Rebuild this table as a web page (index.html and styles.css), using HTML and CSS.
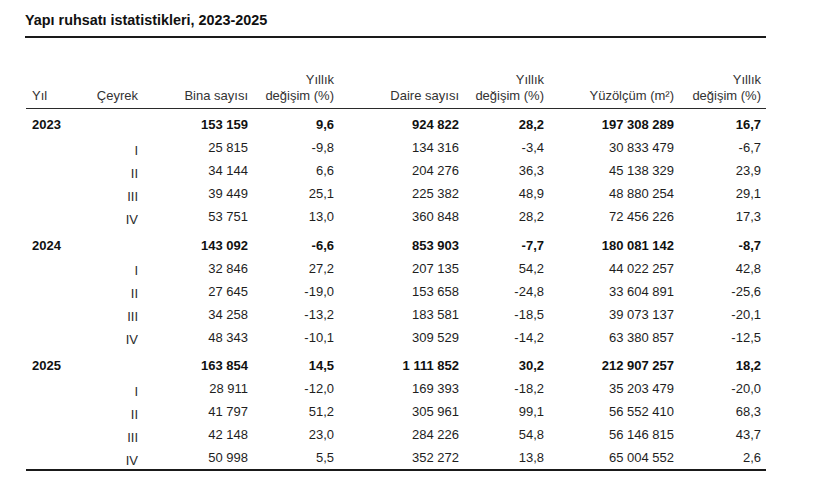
FILE: index.html
```html
<!DOCTYPE html>
<html lang="tr">
<head>
<meta charset="utf-8">
<title>Yapı ruhsatı istatistikleri, 2023-2025</title>
<link rel="stylesheet" href="styles.css">
</head>
<body>
<div class="wrap">
  <h1 class="title">Yapı ruhsatı istatistikleri, 2023-2025</h1>
  <table class="stats">
    <colgroup>
      <col class="c-yil"><col class="c-q"><col class="c-bina"><col class="c-pct">
      <col class="c-daire"><col class="c-pct2"><col class="c-yuz"><col class="c-pct3">
    </colgroup>
    <thead>
      <tr>
        <th class="l">Yıl</th>
        <th>Çeyrek</th>
        <th>Bina sayısı</th>
        <th>Yıllık<br>değişim (%)</th>
        <th>Daire sayısı</th>
        <th>Yıllık<br>değişim (%)</th>
        <th>Yüzölçüm (m²)</th>
        <th>Yıllık<br>değişim (%)</th>
      </tr>
    </thead>
    <tbody>
      <tr class="year first"><td class="l">2023</td><td class="q"></td><td>153 159</td><td>9,6</td><td>924 822</td><td>28,2</td><td>197 308 289</td><td>16,7</td></tr>
      <tr><td></td><td class="q">I</td><td>25 815</td><td>-9,8</td><td>134 316</td><td>-3,4</td><td>30 833 479</td><td>-6,7</td></tr>
      <tr><td></td><td class="q">II</td><td>34 144</td><td>6,6</td><td>204 276</td><td>36,3</td><td>45 138 329</td><td>23,9</td></tr>
      <tr><td></td><td class="q">III</td><td>39 449</td><td>25,1</td><td>225 382</td><td>48,9</td><td>48 880 254</td><td>29,1</td></tr>
      <tr><td></td><td class="q">IV</td><td>53 751</td><td>13,0</td><td>360 848</td><td>28,2</td><td>72 456 226</td><td>17,3</td></tr>
      <tr class="year"><td class="l">2024</td><td class="q"></td><td>143 092</td><td>-6,6</td><td>853 903</td><td>-7,7</td><td>180 081 142</td><td>-8,7</td></tr>
      <tr><td></td><td class="q">I</td><td>32 846</td><td>27,2</td><td>207 135</td><td>54,2</td><td>44 022 257</td><td>42,8</td></tr>
      <tr><td></td><td class="q">II</td><td>27 645</td><td>-19,0</td><td>153 658</td><td>-24,8</td><td>33 604 891</td><td>-25,6</td></tr>
      <tr><td></td><td class="q">III</td><td>34 258</td><td>-13,2</td><td>183 581</td><td>-18,5</td><td>39 073 137</td><td>-20,1</td></tr>
      <tr><td></td><td class="q">IV</td><td>48 343</td><td>-10,1</td><td>309 529</td><td>-14,2</td><td>63 380 857</td><td>-12,5</td></tr>
      <tr class="year"><td class="l">2025</td><td class="q"></td><td>163 854</td><td>14,5</td><td>1 111 852</td><td>30,2</td><td>212 907 257</td><td>18,2</td></tr>
      <tr><td></td><td class="q">I</td><td>28 911</td><td>-12,0</td><td>169 393</td><td>-18,2</td><td>35 203 479</td><td>-20,0</td></tr>
      <tr><td></td><td class="q">II</td><td>41 797</td><td>51,2</td><td>305 961</td><td>99,1</td><td>56 552 410</td><td>68,3</td></tr>
      <tr><td></td><td class="q">III</td><td>42 148</td><td>23,0</td><td>284 226</td><td>54,8</td><td>56 146 815</td><td>43,7</td></tr>
      <tr class="last"><td></td><td class="q">IV</td><td>50 998</td><td>5,5</td><td>352 272</td><td>13,8</td><td>65 004 552</td><td>2,6</td></tr>
    </tbody>
  </table>
</div>
</body>
</html>
```

FILE: styles.css
```css
html, body {
  margin: 0;
  padding: 0;
  background: #ffffff;
}

body {
  font-family: "Liberation Sans", Arial, sans-serif;
  color: #1e1e1e;
}

.wrap {
  width: 740px;
  margin-left: 26px;
}

.title {
  margin: 11px 0 0 -1px;
  padding: 0 0 7px 0;
  font-size: 14.4px;
  line-height: 18px;
  font-weight: bold;
  color: #111;
  border-bottom: 2px solid #1a1a1a;
}

.stats {
  width: 740px;
  border-collapse: collapse;
  table-layout: fixed;
  font-size: 13px;
}

.c-yil { width: 54px; }
.c-q { width: 63px; }
.c-bina { width: 110px; }
.c-pct { width: 86px; }
.c-daire { width: 125px; }
.c-pct2 { width: 85px; }
.c-yuz { width: 130px; }
.c-pct3 { width: 87px; }

.stats th {
  font-weight: normal;
  color: #333;
  text-align: right;
  vertical-align: bottom;
  line-height: 16px;
  padding: 33.5px 5px 4.5px 0;
  border-bottom: 1px solid #2a2a2a;
  white-space: nowrap;
}

.stats th.l {
  text-align: left;
  padding-left: 6px;
}

.stats td {
  text-align: right;
  vertical-align: middle;
  line-height: 15px;
  padding: 4px 5px 4px 0;
  white-space: nowrap;
}

.stats td.l {
  text-align: left;
  padding-left: 6px;
}

.stats td.q {
  padding-top: 6.5px;
  padding-bottom: 1.5px;
  color: #2a2a2a;
}

.stats tr.year td {
  font-weight: bold;
  padding-top: 9.5px;
  color: #111;
}

.stats tr.year.first td {
  padding-top: 8px;
}

.stats tr.last td {
  border-bottom: 2px solid #1a1a1a;
}
```
